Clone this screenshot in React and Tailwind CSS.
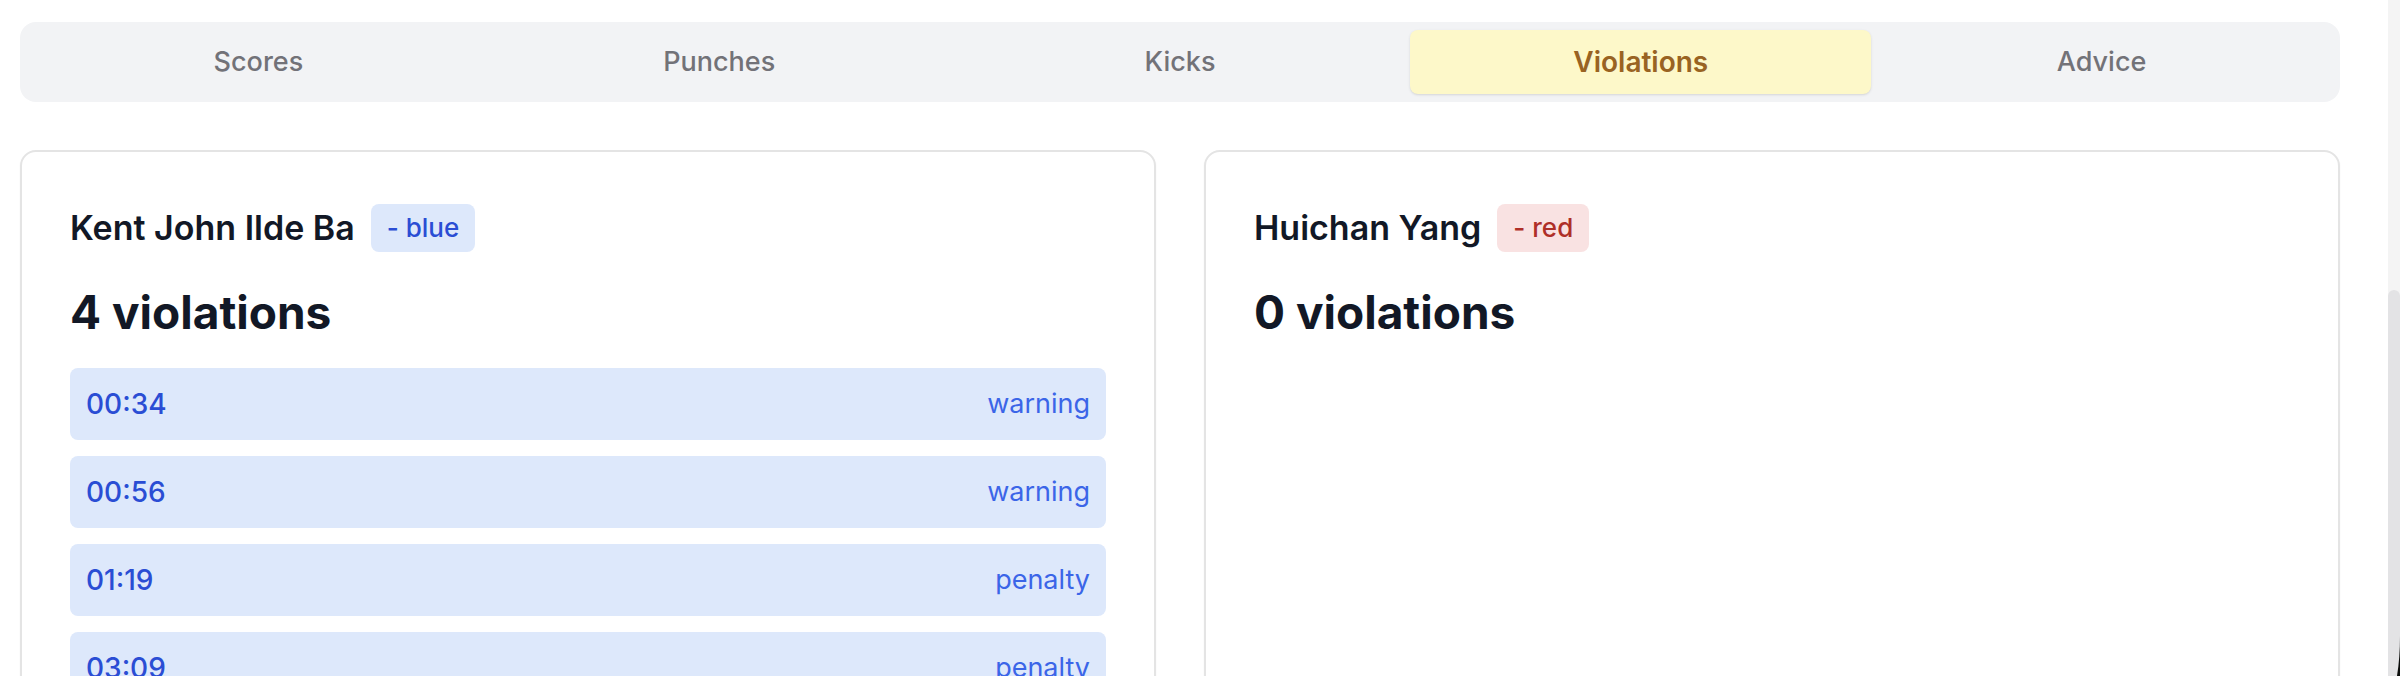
const tabs = ["Scores", "Punches", "Kicks", "Violations", "Advice"];

const fighters = [
  {
    name: "Kent John Ilde Ba",
    corner: "blue",
    violations: [
      { time: "00:34", type: "warning" },
      { time: "00:56", type: "warning" },
      { time: "01:19", type: "penalty" },
      { time: "03:09", type: "penalty" },
    ],
  },
  { name: "Huichan Yang", corner: "red", violations: [] },
];

const cornerStyles = {
  blue: "bg-[#dde8fb] text-[#2a4dd4]",
  red: "bg-[#f9e2e2] text-[#af2f28]",
};

function TabBar({ active }) {
  return (
    <div role="tablist" className="grid grid-cols-5 rounded-2xl bg-[#f2f3f5] p-2">
      {tabs.map((tab) => (
        <button
          key={tab}
          type="button"
          role="tab"
          aria-selected={tab === active}
          className={
            tab === active
              ? "rounded-lg bg-[#fdf8c9] py-3 text-[28px] leading-10 font-semibold text-[#996322] shadow-sm"
              : "rounded-lg py-3 text-[27px] leading-10 font-medium text-[#727278]"
          }
        >
          {tab}
        </button>
      ))}
    </div>
  );
}

function FighterCard({ fighter }) {
  const { name, corner, violations } = fighter;
  return (
    <section className="flex flex-col gap-6 rounded-2xl border-2 border-[#e4e4e4] bg-white p-12 shadow-xs">
      <div className="flex h-14 items-center gap-4">
        <h2 className="text-[34px] leading-14 font-semibold">{name}</h2>
        <span className={`rounded-lg px-4 py-1 text-[26px] leading-10 font-medium ${cornerStyles[corner]}`}>
          - {corner}
        </span>
      </div>
      <p className="text-[46px] leading-16 font-bold">{violations.length} violations</p>
      <ul className="flex flex-col gap-4">
        {violations.map((violation) => (
          <li
            key={violation.time}
            className="flex items-center justify-between rounded-lg bg-[#dde8fb] p-4 leading-10"
          >
            <span className="text-[28px] font-medium text-[#2a4dd4]">{violation.time}</span>
            <span className="text-[27px] text-[#3b65e8]">{violation.type}</span>
          </li>
        ))}
      </ul>
    </section>
  );
}

function ScrollRail() {
  return (
    <div aria-hidden="true" className="relative flex w-3 shrink-0 flex-col bg-[#f4f4f4] pt-[290px]">
      <div className="flex-1 rounded-t-full bg-[#e3e3e5]" />
      <svg className="absolute right-0 bottom-0 h-10 w-3" viewBox="0 0 12 40">
        <path d="M12 0C12 14 11 28 9 40H12Z" fill="#0b0d0b" />
      </svg>
    </div>
  );
}

export default function App() {
  return (
    <div className="flex h-screen overflow-hidden bg-white font-[Inter,sans-serif] text-[#121826]">
      <main className="min-w-0 flex-1 overflow-hidden pt-[22px] pr-12 pl-5">
        <TabBar active="Violations" />
        <div className="mt-12 grid grid-cols-2 gap-12">
          {fighters.map((fighter) => (
            <FighterCard key={fighter.name} fighter={fighter} />
          ))}
        </div>
      </main>
      <ScrollRail />
    </div>
  );
}
